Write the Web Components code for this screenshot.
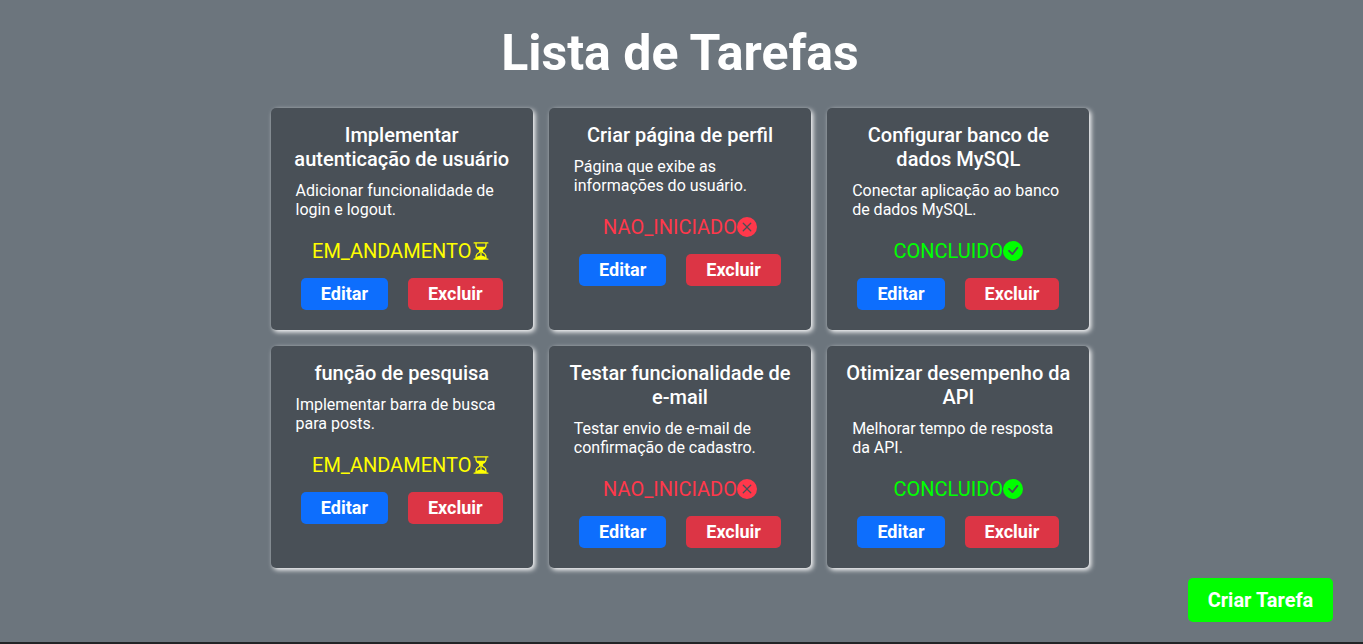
<!DOCTYPE html>
<html lang="pt-BR">
<head>
<meta charset="utf-8">
<title>Lista de Tarefas</title>
<style>
html,body{margin:0;height:100%;overflow:hidden}
body{font-family:Roboto,"Liberation Sans",sans-serif;color:#fff;background:#6c757d}
</style>
</head>
<body>
<task-board>
  <task-card heading="Implementar autenticação de usuário" status="EM_ANDAMENTO">Adicionar funcionalidade de login e logout.</task-card>
  <task-card heading="Criar página de perfil" status="NAO_INICIADO">Página que exibe as informações do usuário.</task-card>
  <task-card heading="Configurar banco de dados MySQL" status="CONCLUIDO">Conectar aplicação ao banco de dados MySQL.</task-card>
  <task-card heading="função de pesquisa" status="EM_ANDAMENTO">Implementar barra de busca para posts.</task-card>
  <task-card heading="Testar funcionalidade de e-mail" status="NAO_INICIADO">Testar envio de e-mail de confirmação de cadastro.</task-card>
  <task-card heading="Otimizar desempenho da API" status="CONCLUIDO">Melhorar tempo de resposta da API.</task-card>
</task-board>
<script>
const STATUS = {
  EM_ANDAMENTO: ['#ffff00', 'M2.5 15a.5.5 0 1 1 0-1h1v-1a4.5 4.5 0 0 1 2.557-4.06c.29-.139.443-.377.443-.59v-.7c0-.213-.154-.451-.443-.59A4.5 4.5 0 0 1 3.5 3V2h-1a.5.5 0 0 1 0-1h11a.5.5 0 0 1 0 1h-1v1a4.5 4.5 0 0 1-2.557 4.06c-.29.139-.443.377-.443.59v.7c0 .213.154.451.443.59A4.5 4.5 0 0 1 12.5 13v1h1a.5.5 0 0 1 0 1zm2-13v1c0 .537.12 1.045.337 1.5h6.326c.216-.455.337-.963.337-1.5V2zm3 6.35c0 .701-.478 1.236-1.011 1.492A3.5 3.5 0 0 0 4.5 13s.866-1.299 3-1.48zm1 0v3.17c2.134.181 3 1.48 3 1.48a3.5 3.5 0 0 0-1.989-3.158C8.978 9.586 8.5 9.052 8.5 8.351z'],
  NAO_INICIADO: ['#ff384b', 'M16 8A8 8 0 1 1 0 8a8 8 0 0 1 16 0M5.354 4.646a.5.5 0 1 0-.708.708L7.293 8l-2.647 2.646a.5.5 0 0 0 .708.708L8 8.707l2.646 2.647a.5.5 0 0 0 .708-.708L8.707 8l2.647-2.646a.5.5 0 0 0-.708-.708L8 7.293z'],
  CONCLUIDO: ['#00ff00', 'M16 8A8 8 0 1 1 0 8a8 8 0 0 1 16 0m-3.97-3.03a.75.75 0 0 0-1.08.022L7.477 9.417 5.384 7.323a.75.75 0 0 0-1.06 1.06L6.97 11.03a.75.75 0 0 0 1.079-.02l3.992-4.99a.75.75 0 0 0-.01-1.05z']
};

customElements.define('task-button', class extends HTMLElement {
  constructor() {
    super();
    this.attachShadow({mode: 'open'}).innerHTML = `
      <style>
        :host{display:block}
        button{display:block;box-sizing:border-box;height:var(--h,32px);margin:0;padding:0 var(--px,20px);border:0;border-radius:5px;
          background:var(--bg);color:#fff;font:700 var(--fs,18px)/1 Roboto,"Liberation Sans",sans-serif;white-space:nowrap}
      </style>
      <button><slot></slot></button>`;
  }
});

customElements.define('task-status', class extends HTMLElement {
  connectedCallback() {
    const name = this.getAttribute('name');
    const [color, path] = STATUS[name];
    this.attachShadow({mode: 'open'}).innerHTML = `
      <style>
        :host{display:flex;justify-content:center;align-items:center;height:24px;font-size:20px;line-height:24px;color:${color}}
        svg{width:20px;height:20px;fill:currentColor}
      </style>
      <span>${name}</span><svg viewBox="0 0 16 16"><path d="${path}"/></svg>`;
  }
});

customElements.define('task-card', class extends HTMLElement {
  connectedCallback() {
    this.attachShadow({mode: 'open'}).innerHTML = `
      <style>
        :host{display:block;box-sizing:border-box;padding:15px 15px 20px;border-radius:5px;background:#495057;
          box-shadow:2px 2px 5px #fff}
        h2{margin:0 0 10px;font-size:20px;line-height:24px;font-weight:500;text-align:center}
        p{margin:0 auto 20px;width:212.4px;font-size:16px;line-height:19px}
        .actions{display:flex;justify-content:center;gap:20px;margin-top:15px}
        .edit{--bg:#0d6efd}
        .delete{--bg:#dc3545}
      </style>
      <h2>${this.getAttribute('heading')}</h2>
      <p><slot></slot></p>
      <task-status name="${this.getAttribute('status')}"></task-status>
      <div class="actions">
        <task-button class="edit">Editar</task-button>
        <task-button class="delete">Excluir</task-button>
      </div>`;
  }
});

customElements.define('task-board', class extends HTMLElement {
  constructor() {
    super();
    this.attachShadow({mode: 'open'}).innerHTML = `
      <style>
        :host{display:flex;flex-direction:column;box-sizing:border-box;height:644px;padding-top:23px;border-bottom:2px solid #222426}
        h1{margin:0 3px 25px 0;font-size:50px;line-height:60px;font-weight:700;text-align:center}
        .grid{display:grid;grid-template-columns:repeat(3,262.3px);grid-auto-rows:222px;gap:16px;justify-content:center;margin-right:2.96px}
        .create{align-self:flex-end;margin:10px 30px 0 0;--bg:#00ff00;--h:44px;--fs:20px;--px:19.7px}
      </style>
      <h1>Lista de Tarefas</h1>
      <div class="grid"><slot></slot></div>
      <task-button class="create">Criar Tarefa</task-button>`;
  }
});
</script>
</body>
</html>
